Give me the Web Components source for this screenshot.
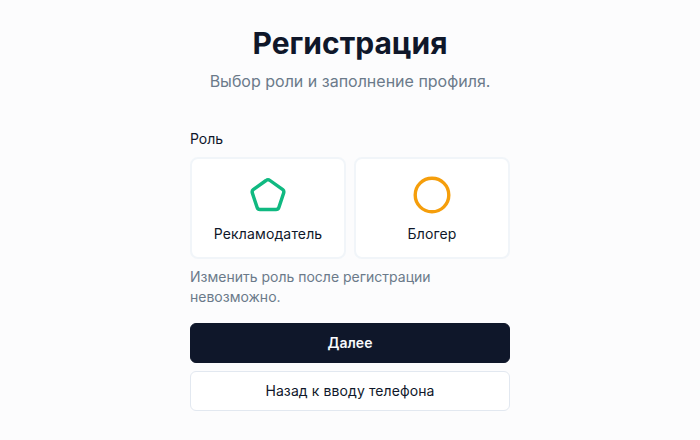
<!DOCTYPE html>
<html lang="ru"><head><meta charset="utf-8"><style>
html,body{margin:0;padding:0;height:440px;overflow:hidden;background:#fcfcfd;font-family:Inter,"Liberation Sans",sans-serif;color:#0f172a}
</style></head><body>
<template id="t-page"><style>
:host{display:flex;flex-direction:column;width:320px;margin:0 auto;padding-top:25px}
header{display:flex;flex-direction:column;align-items:center;margin:0 -40px 36px}
h1{margin:0;font:700 30px/36px Inter,sans-serif;color:#0f172a}
p{margin:8px 0 0;font:400 16px/24px Inter,sans-serif;color:#6b7a8a}
.label{font:400 14px/20px Inter,sans-serif;margin-bottom:8px;color:#0f172a}
.roles{display:grid;grid-template-columns:1fr 1fr;gap:8px}
.hint{margin-top:8px;font:400 14px/20px Inter,sans-serif;color:#6b7a8a}
.actions{display:flex;flex-direction:column;gap:8px;margin-top:16px}
</style>
<header><h1>Регистрация</h1><p>Выбор роли и заполнение профиля.</p></header>
<div class="label">Роль</div>
<div class="roles"><slot name="roles"></slot></div>
<div class="hint">Изменить роль после регистрации невозможно.</div>
<div class="actions"><slot name="actions"></slot></div>
</template>
<template id="t-role"><style>
:host{display:flex;flex-direction:column;align-items:center;box-sizing:border-box;height:102px;padding-top:16px;background:#fff;border:2px solid #f1f5f9;border-radius:8px}
span{margin-top:9px;font:400 14px/20px Inter,sans-serif;letter-spacing:.15px;color:#0f172a}
</style><slot name="icon"></slot><span><slot></slot></span></template>
<template id="t-btn"><style>
:host{display:flex;align-items:center;justify-content:center;box-sizing:border-box;height:40px;border-radius:6px;font:400 14px/20px Inter,sans-serif;letter-spacing:.1px;background:#fff;color:#0f172a;border:1px solid #e2e8f0}
:host([primary]){background:#0f172a;color:#f8fafc;border-color:#0f172a;font-weight:600;letter-spacing:0}
</style><slot></slot></template>

<reg-page>
  <role-card slot="roles"><svg slot="icon" width="40" height="40" viewBox="0 0 40 40" fill="none" stroke="#10b981" stroke-width="3.4" stroke-linejoin="round" style="display:block"><path d="M18 5.5Q20 4 22 5.5L34.8 14.7Q36.3 15.9 35.7 17.9L30.9 32.4Q30.2 34.5 28 34.5H12Q9.8 34.5 9.1 32.4L4.3 17.9Q3.7 15.9 5.2 14.7Z"/></svg>Рекламодатель</role-card>
  <role-card slot="roles"><svg slot="icon" width="40" height="40" viewBox="0 0 40 40" fill="none" stroke="#f59e0b" stroke-width="3.4" style="display:block"><circle cx="20" cy="20" r="16.8"/></svg>Блогер</role-card>
  <app-btn slot="actions" primary>Далее</app-btn>
  <app-btn slot="actions">Назад к вводу телефона</app-btn>
</reg-page>
<script>
function def(name,id){customElements.define(name,class extends HTMLElement{constructor(){super();this.attachShadow({mode:"open"}).appendChild(document.getElementById(id).content.cloneNode(true));}});}
def("reg-page","t-page");def("role-card","t-role");def("app-btn","t-btn");
</script>
</body></html>
